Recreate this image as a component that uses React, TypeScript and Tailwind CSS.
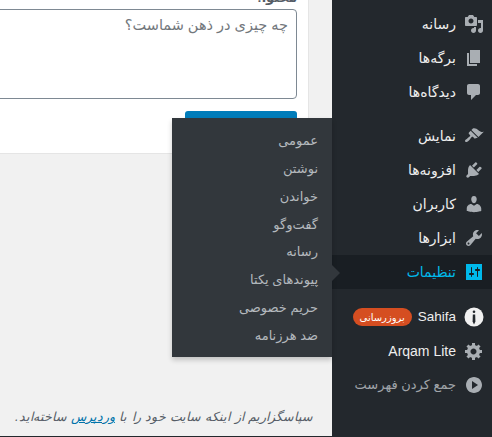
import type { ReactNode } from "react";

const font = "font-['Liberation_Sans','DejaVu_Sans',sans-serif]";

const flyoutItems = ["عمومی", "نوشتن", "خواندن", "گفت‌وگو", "رسانه", "پیوندهای یکتا", "حریم خصوصی", "ضد هرزنامه"];

function Dash({ d, className = "h-5 w-5 fill-[#a9aeb3]" }: { d: string; className?: string }) {
  return (
    <svg viewBox="0 0 20 20" className={className}>
      <path d={d} />
    </svg>
  );
}

const icons = {
  media:
    "M13 11V4c0-.55-.45-1-1-1h-1.670L9 1H5L3.670 3H2c-.55 0-1 .45-1 1v7c0 .55.45 1 1 1h10c.55 0 1-.45 1-1zM7 4.500c1.380 0 2.500 1.120 2.500 2.500S8.380 9.500 7 9.500 4.500 8.380 4.500 7 5.620 4.500 7 4.500zM14 6h5v10.500c0 1.380-1.120 2.500-2.500 2.500S14 17.880 14 16.500s1.120-2.500 2.500-2.500c.17 0 .34.020.5.050V9h-3V6zm-4 8.050V13h2v3.500c0 1.380-1.120 2.500-2.500 2.500S7 17.880 7 16.500 8.120 14 9.500 14c.17 0 .34.020.5.050z",
  page: "M6 15V2h10v13H6zm-1 1h8v2H3V5h2v11z",
  comment: "M5 2h9c1.100 0 2 .9 2 2v7c0 1.100-.9 2-2 2h-2l-5 5v-5H5c-1.100 0-2-.9-2-2V4c0-1.100.9-2 2-2z",
  brush:
    "M14.480 11.060L7.410 3.990l1.500-1.500c.5-.56 2.300-.47 3.510.32 1.210.8 1.430 1.280 2.910 2.100 1.180.64 2.450 1.260 4.450.85zm-.71.71L6.700 4.700 4.930 6.470c-.39.39-.39 1.020 0 1.410l1.060 1.060c.39.39.39 1.030 0 1.420-.6.6-1.430 1.110-2.210 1.690-.35.26-.7.53-1.010.84C1.430 13.230.4 14.750 1.370 15.700s2.470-.07 3.800-1.400c.31-.31.58-.66.85-1.020.57-.78 1.080-1.600 1.690-2.210.39-.39 1.020-.39 1.410 0l1.060 1.060c.39.39 1.020.39 1.410 0z",
  plug:
    "M13.110 4.360L9.870 7.600 8 5.730l3.240-3.240c.35-.34 1.050-.2 1.560.32.52.51.66 1.210.31 1.550zm-8 1.770l.91-1.120 9.010 9.010-1.190.84c-.71.71-2.630 1.160-3.820 1.160H6.140L4.900 17.260c-.59.59-1.540.59-2.120 0-.59-.58-.59-1.530 0-2.120l1.240-1.240v-3.880c0-1.130.4-3.190 1.090-3.890zm7.260 3.970l3.240-3.240c.34-.35 1.040-.21 1.550.31.52.51.66 1.210.31 1.550l-3.240 3.250z",
  user:
    "M10 9.250c-2.270 0-2.730-3.440-2.730-3.440C7 4.020 7.820 2 9.970 2c2.160 0 2.980 2.020 2.710 3.810 0 0-.41 3.440-2.680 3.440zm0 2.570L12.720 10c2.390 0 4.520 2.330 4.520 4.530v2.490s-3.650 1.130-7.240 1.130c-3.650 0-7.240-1.130-7.240-1.130v-2.490c0-2.250 1.940-4.480 4.470-4.480z",
  wrench:
    "M16.680 9.770c-1.340 1.340-3.300 1.670-4.950.99l-5.410 6.520c-.99.99-2.590.99-3.580 0s-.99-2.590 0-3.570l6.520-5.420c-.68-1.650-.35-3.610.99-4.950 1.280-1.280 3.120-1.620 4.720-1.060l-2.890 2.890 2.820 2.820 2.860-2.870c.53 1.580.18 3.390-1.080 4.650zM3.810 16.210c.4.39 1.040.39 1.430 0 .4-.4.4-1.040 0-1.430-.39-.4-1.030-.4-1.430 0-.39.39-.39 1.030 0 1.430z",
  settings:
    "M18 18V2H2v16h16zM8 11h1c.55 0 1 .45 1 1s-.45 1-1 1H8v1.500c0 .28-.22.5-.5.5s-.5-.22-.5-.5V13H6c-.55 0-1-.45-1-1s.45-1 1-1h1V5.500c0-.28.22-.5.5-.5s.5.22.5.5V11zm5-2h-1c-.55 0-1-.45-1-1s.45-1 1-1h1V5.500c0-.28.22-.5.5-.5s.5.22.5.5V7h1c.55 0 1 .45 1 1s-.45 1-1 1h-1v5.500c0 .28-.22.5-.5.5s-.5-.22-.5-.5V9z",
  cog:
    "M18 12h-2.180c-.17.7-.44 1.350-.81 1.930l1.540 1.540-2.100 2.100-1.540-1.540c-.58.36-1.230.64-1.910.81V19H8v-2.180c-.68-.17-1.330-.45-1.910-.81l-1.540 1.540-2.120-2.120 1.540-1.540c-.36-.58-.64-1.230-.81-1.910H.98V9h2.170c.17-.68.45-1.330.81-1.910L2.440 5.550l2.120-2.120L6.100 4.970c.58-.36 1.230-.64 1.910-.81V2h3v2.170c.68.17 1.330.45 1.910.81l1.540-1.540 2.120 2.120-1.540 1.540c.36.58.64 1.230.81 1.910H18v3zm-8.500 1.500c1.660 0 3-1.340 3-3s-1.340-3-3-3-3 1.340-3 3 1.340 3 3 3z",
  collapse: "M10 2c4.420 0 8 3.580 8 8s-3.580 8-8 8-8-3.580-8-8 3.580-8 8-8zM8 6v8l6-4z",
};

function InfoIcon() {
  return (
    <svg viewBox="0 0 20 20" className="h-[20px] w-[20px]">
      <circle cx="10" cy="10" r="9.500" fill="#f1f1f1" />
      <circle cx="10" cy="4.800" r="1.300" fill="#23282d" />
      <path d="M8.800 7.500h2.400l.2 7L10 17.500l-1.400-3z" fill="#23282d" />
    </svg>
  );
}

function Row({
  icon,
  label,
  className = "text-[14px] text-[#eeeeee]",
}: {
  icon: ReactNode;
  label: ReactNode;
  className?: string;
}) {
  return (
    <div className={`flex h-[34px] items-center ${className}`}>
      <div className="flex w-[36px] shrink-0 items-center justify-center">{icon}</div>
      {label}
    </div>
  );
}

export default function App() {
  return (
    <div className={`relative flex h-[437px] w-[492px] overflow-hidden bg-[#f1f1f1] ${font}`}>
      <main dir="rtl" className="flex w-[332px] shrink-0 flex-col justify-between border-b border-[#23282d]">
        <div className="ml-[-10px] mr-[23px] h-[154px] border-b border-l border-r border-[#e5e5e5] bg-white pr-[11px]">
          <div className="mt-[-12px] h-[21px] text-[13px] font-bold text-[#555d66]">محتوا:</div>
          <div className="h-[90px] rounded-[4px] border border-[#7e8993] px-[8px] py-[5px] text-[14.500px] text-[#72777c]">
            چه چیزی در ذهن شماست؟
          </div>
          <div className="mt-[12px] h-[30px] w-[112px] rounded-[3px] bg-[#007cba]" />
        </div>
        <p className="pb-[9px] pr-[19px] text-[12.600px] italic text-[#555d66] [word-spacing:0.8px]">
          سپاسگزاریم از اینکه سایت خود را با{" "}
          <span className="text-[#0073aa] underline">وردپرس</span> ساخته‌اید.
        </p>
      </main>

      <aside dir="rtl" className="w-[160px] shrink-0 bg-[#23282d] pt-[7px]">
        <Row icon={<Dash d={icons.media} />} label="رسانه" />
        <Row icon={<Dash d={icons.page} />} label="برگه‌ها" />
        <Row icon={<Dash d={icons.comment} />} label="دیدگاه‌ها" />
        <Row className="mt-[10px] text-[14px] text-[#eeeeee]" icon={<Dash d={icons.brush} />} label="نمایش" />
        <Row icon={<Dash d={icons.plug} />} label="افزونه‌ها" />
        <Row icon={<Dash d={icons.user} />} label="کاربران" />
        <Row icon={<Dash d={icons.wrench} />} label="ابزارها" />
        <Row
          className="bg-[#191e23] text-[14px] text-[#00b9eb]"
          icon={<Dash d={icons.settings} className="h-5 w-5 fill-[#00b9eb]" />}
          label="تنظیمات"
        />
        <Row
          className="mt-[11px] text-[14px] text-[#eeeeee]"
          icon={<InfoIcon />}
          label={
            <div className="flex items-center gap-[6px]">
              <span className="text-[13.500px]">Sahifa</span>
              <span className="flex h-[18px] w-[59px] items-center justify-center rounded-[9px] bg-[#d54e21] text-[10px] text-white">
                بروزرسانی
              </span>
            </div>
          }
        />
        <Row icon={<Dash d={icons.cog} />} label="Arqam Lite" />
        <Row
          className="text-[13px] text-[#a0a5aa]"
          icon={<Dash d={icons.collapse} />}
          label="جمع کردن فهرست"
        />
      </aside>

      <div
        dir="rtl"
        className="absolute left-[172px] top-[118px] h-[239px] w-[160px] bg-[#32373c] pr-[14px] pt-[9px] text-[13px] text-[#b4b9be] shadow-[0_3px_5px_rgba(0,0,0,0.2)]"
      >
        {flyoutItems.map((item) => (
          <div key={item} className="flex h-[27.800px] items-center">
            {item}
          </div>
        ))}
      </div>
      <div className="absolute left-[332px] top-[265px] h-0 w-0 border-y-[8px] border-l-[8px] border-y-transparent border-l-[#32373c]" />
    </div>
  );
}
